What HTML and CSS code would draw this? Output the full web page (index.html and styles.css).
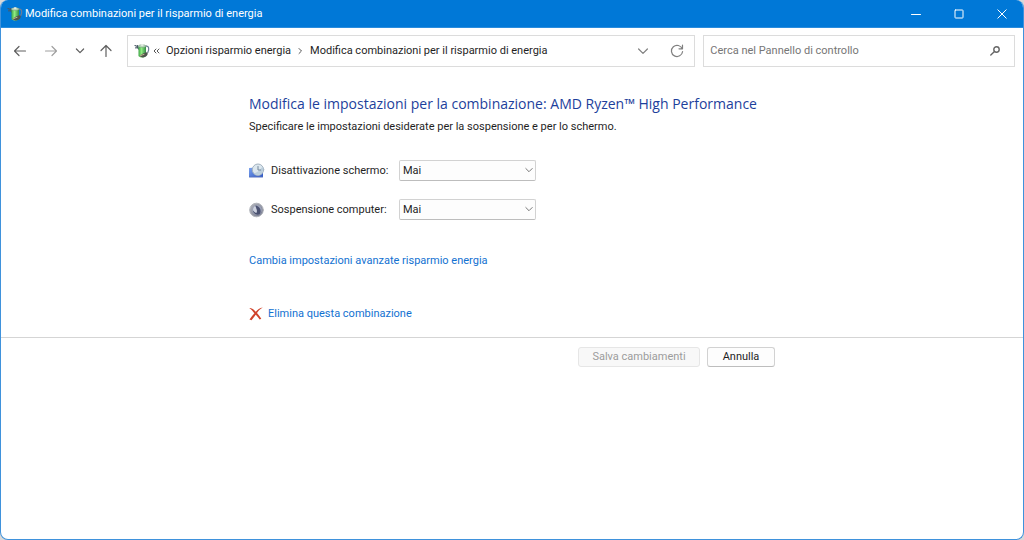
FILE: index.html
```html
<!DOCTYPE html>
<html lang="it">
<head>
<meta charset="utf-8">
<title>Modifica combinazioni per il risparmio di energia</title>
<link rel="stylesheet" href="styles.css">
</head>
<body>
<svg class="defs" aria-hidden="true">
  <defs>
    <linearGradient id="cell" x1="0" x2="1" y1="0" y2="0">
      <stop offset="0" stop-color="#3fa548"/><stop offset=".4" stop-color="#8fec80"/><stop offset="1" stop-color="#348a45"/>
    </linearGradient>
    <linearGradient id="screen" x1="0" x2="1" y1="0" y2="1">
      <stop offset="0" stop-color="#7fa6ef"/><stop offset="1" stop-color="#2f57c4"/>
    </linearGradient>
    <linearGradient id="moon" x1="0" x2="1" y1="0" y2="1">
      <stop offset="0" stop-color="#b4b7bd"/><stop offset="1" stop-color="#70748a"/>
    </linearGradient>
    <symbol id="battery" viewBox="0 0 16 16">
      <path d="M1 2.500l3 1.200M1.600 4.800l2.600-.3M3.600 2.500c-.6 2 .2 3.200 1.800 4" stroke="#4a5866" stroke-width="1.200" fill="none"/>
      <path d="M12 3.200c3-.8 3.400 3 1.800 6.300" stroke="#6d7c95" stroke-width="1.200" fill="none"/>
      <path d="M4.500 3v9.500c0 2.800 7.500 2.800 7.500 0V3z" fill="url(#cell)"/>
      <ellipse cx="8.200" cy="3" rx="3.800" ry="1.300" fill="#c4dfc4" stroke="#71907a" stroke-width=".5"/>
      <ellipse cx="8.200" cy="2" rx="1.500" ry=".8" fill="#f3f7f1"/>
      <path d="M5.600 12.800c1.600-.6 3-3 7.600-3.500 1.200 1.500.2 3.800-2 4.500-2 1-4.400 1-5.600-1z" fill="#4e544c"/>
      <path d="M6.500 12.800c1.500-.4 2-1.400 3.500-1.500" stroke="#c3b98e" stroke-width="1" fill="none"/>
    </symbol>
  </defs>
</svg>
<div class="window">
  <header class="titlebar">
    <svg class="icon16"><use href="#battery"/></svg>
    <span class="titlebar-text">Modifica combinazioni per il risparmio di energia</span>
    <button class="caption" aria-label="Riduci a icona"><svg viewBox="0 0 10 10"><path d="M0.500 5.500h9"/></svg></button>
    <button class="caption" aria-label="Ingrandisci"><svg viewBox="0 0 10 10"><rect x="1" y="1" width="8" height="8" rx=".6"/></svg></button>
    <button class="caption" aria-label="Chiudi"><svg viewBox="0 0 10 10"><path d="M.8.8l8.400 8.400M9.200.8L.8 9.200"/></svg></button>
  </header>
  <nav class="toolbar">
    <div class="nav-buttons">
      <button class="nav-button" aria-label="Indietro"><svg viewBox="0 0 14 14"><path d="M12.500 7H1.500M6 2.500L1.500 7 6 11.500"/></svg></button>
      <button class="nav-button faded" aria-label="Avanti"><svg viewBox="0 0 14 14"><path d="M1.500 7h11M8 2.500L12.500 7 8 11.500"/></svg></button>
      <button class="nav-button" aria-label="Posizioni recenti"><svg viewBox="0 0 14 14"><path d="M3.400 5L7 8.600 10.600 5"/></svg></button>
      <button class="nav-button" aria-label="Su"><svg viewBox="0 0 14 14"><path d="M7 12.500V1.500M2 6.500l5-5 5 5"/></svg></button>
    </div>
    <div class="address">
      <svg class="icon16"><use href="#battery"/></svg>
      <svg class="overflow" viewBox="0 0 7 8"><path d="M3 2L1 4l2 2M6 2L4 4l2 2"/></svg>
      <a class="crumb" href="#">Opzioni risparmio energia</a>
      <svg class="separator" viewBox="0 0 7 8"><path d="M2 1.500L4.500 4 2 6.500"/></svg>
      <a class="crumb" href="#">Modifica combinazioni per il risparmio di energia</a>
      <button class="address-button history" aria-label="Cronologia"><svg viewBox="0 0 14 14"><path d="M2.600 5L7 9.400 11.400 5"/></svg></button>
      <button class="address-button" aria-label="Aggiorna"><svg viewBox="0 0 14 14"><path d="M12.300 5A5.600 5.600 0 1 0 12.600 7.500M12.500 1.200V4.800H9"/></svg></button>
    </div>
    <div class="search">
      <input class="search-input" type="text" aria-label="Cerca" placeholder="Cerca nel Pannello di controllo">
      <svg class="search-icon" viewBox="0 0 12 12"><circle cx="7.500" cy="4.500" r="2.700"/><path d="M5.500 6.500L1.800 10"/></svg>
    </div>
  </nav>
  <main>
    <section class="content">
      <h1>Modifica le impostazioni per la combinazione: AMD Ryzen™ High Performance</h1>
      <p class="intro">Specificare le impostazioni desiderate per la sospensione e per lo schermo.</p>
      <div class="settings">
        <svg class="icon16" viewBox="0 0 16 16"><path d="M0 5l14-1v10H0z" fill="url(#screen)"/><path d="M.5 14h13" stroke="#5673c0"/><circle cx="9" cy="6.700" r="5.700" fill="#dce7ee" stroke="#a3b2bf"/><path d="M5 10.500c3-1 6-3 8.500-7a5.600 5.600 0 0 1-8.500 7z" fill="#bccfdd"/><path d="M9 3.500V7h2.700" stroke="#75879a" fill="none"/></svg>
        <label for="display">Disattivazione schermo:</label>
        <span class="combo"><select id="display"><option>Mai</option></select><svg viewBox="0 0 8 8"><path d="M.8 2.500L4 5.700 7.200 2.500"/></svg></span>
        <svg class="icon16" viewBox="0 0 16 16"><circle cx="7.500" cy="8" r="6.800" fill="url(#moon)" stroke="#b0b3ba"/><circle cx="8" cy="8" r="4.800" fill="#9ca2b8"/><path d="M6.500 3.500C10.500 4 12.800 8 11 11.800 8.500 13.800 4.500 12 4 9c2 .5 4-2 2.500-5.500z" fill="#4a5170"/><path d="M5.800 4.200c1.800 2 2.800 4.600 1.600 6.800-3.200-.6-4.600-4.600-1.600-6.800z" fill="#cdd2df"/></svg>
        <label for="sleep">Sospensione computer:</label>
        <span class="combo"><select id="sleep"><option>Mai</option></select><svg viewBox="0 0 8 8"><path d="M.8 2.500L4 5.700 7.200 2.500"/></svg></span>
      </div>
      <a class="link" href="#">Cambia impostazioni avanzate risparmio energia</a>
      <a class="link delete" href="#"><svg class="icon14" viewBox="0 0 14 14"><path d="M.3 1C3 .4 5 3 6.800 4.800 8.700 2.500 10.500 1 13.800.4 11 2 9.300 3.800 8 6.100c1.500 1.600 3 3.600 4.300 5.600l-1.600.9C9.500 10.800 8.200 9.200 6.800 7.800 5.300 9.500 4 11.300 2.500 13.200L.5 12.400C2 10 3.700 8 5.400 6.200 4 4.500 2.500 2.500.3 1z" fill="#d0432b"/></svg>Elimina questa combinazione</a>
    </section>
    <footer class="footer">
      <div class="actions">
        <button class="action" disabled>Salva cambiamenti</button>
        <button class="action">Annulla</button>
      </div>
    </footer>
  </main>
</div>
</body>
</html>
```
FILE: styles.css
```css
* { box-sizing: border-box; }

body {
  margin: 0;
  background: #d8d8d8;
  font: 11px/16px Roboto, "Open Sans", sans-serif;
  color: #1f1f1f;
}

button, input, select { font: inherit; color: inherit; }
button { padding: 0; border: 0; background: none; }
a { text-decoration: none; color: inherit; }
svg { display: block; flex: none; fill: none; stroke-linecap: round; stroke-linejoin: round; }

.defs { position: absolute; width: 0; height: 0; }
.icon16 { width: 16px; height: 16px; }
.icon14 { width: 14px; height: 14px; }

.window {
  min-height: 100vh;
  overflow: hidden;
  border: 1px solid #3f92dc;
  border-top: 0;
  border-radius: 8px;
  background: #fff;
}

.titlebar {
  display: flex;
  align-items: center;
  height: 28px;
  padding-left: 6px;
  background: #0078d7;
  border-bottom: 1px solid #2a8cdd;
  color: #fff;
}
.titlebar-text { flex: 1; margin-left: 2px; }
.caption { display: flex; align-items: center; justify-content: center; width: 43px; height: 27px; }
.caption svg { width: 10px; height: 10px; stroke: #fff; stroke-width: 1; }

.toolbar {
  display: grid;
  grid-template-columns: auto 569fr 312fr;
  align-items: center;
  gap: 8px;
  padding: 7px 8px 7px 4px;
}
.nav-buttons { display: grid; grid-template-columns: 30px 32px 26px 26px; }
.nav-button { display: flex; align-items: center; justify-content: center; height: 28px; }
.nav-button svg { width: 14px; height: 14px; stroke: #606060; stroke-width: 1.200; }
.nav-button.faded svg { stroke: #a0a0a0; }

.address, .search {
  display: flex;
  align-items: center;
  height: 32px;
  border: 1px solid #dcdcdc;
}
.address { padding: 0 4px 0 6px; }
.overflow, .separator { width: 7px; height: 8px; stroke: #555; stroke-width: 1; }
.overflow { margin: 0 6px 0 3px; }
.separator { margin: 0 6px; }
.address-button { display: flex; align-items: center; justify-content: center; width: 27px; height: 30px; }
.address-button.history { width: 41px; margin-left: auto; }
.address-button svg { width: 14px; height: 14px; stroke: #808080; stroke-width: 1.200; }

.search { padding: 0 13px 0 6px; }
.search-input { flex: 1; min-width: 0; padding: 0; border: 0; outline: 0; background: none; }
.search-input::placeholder { color: #767676; opacity: 1; }
.search-icon { width: 12px; height: 12px; stroke: #666; stroke-width: 1.400; }

.content, .actions { width: 100%; max-width: 526px; margin: 0 auto; }

.content {
  display: flex;
  flex-direction: column;
  align-items: flex-start;
  padding: 20px 0 15px;
}
h1 { margin: 0; font: 400 14px/20px "Open Sans", "Noto Sans", sans-serif; color: #1d3f9c; }
.intro { margin: 5px 0 25px; }

.settings {
  display: grid;
  grid-template-columns: 16px 134px 137px;
  align-items: center;
  row-gap: 18px;
  margin-bottom: 33px;
}
.settings label { padding-left: 6px; }
.combo { position: relative; }
.combo select {
  display: block;
  width: 100%;
  height: 21px;
  padding: 0 3px;
  border: 1px solid #d2d2d2;
  border-bottom-color: #bdbdbd;
  border-radius: 2px;
  background: #fdfdfd;
  appearance: none;
}
.combo svg { position: absolute; right: 3px; top: 6px; width: 8px; height: 8px; stroke: #777; pointer-events: none; }

.link { display: flex; align-items: center; gap: 5px; color: #1271d1; }
.delete { margin-top: 37px; }

.footer { border-top: 1px solid #d5d5d5; padding-top: 9px; }
.actions { display: flex; justify-content: flex-end; gap: 7px; }
.action {
  width: 68px;
  height: 20px;
  border: 1px solid #d2d2d2;
  border-bottom-color: #bdbdbd;
  border-radius: 3px;
  background: #fdfdfd;
}
.action:disabled { width: 122px; border-color: #e6e6e6; background: #f8f8f8; color: #9c9c9c; }
```
